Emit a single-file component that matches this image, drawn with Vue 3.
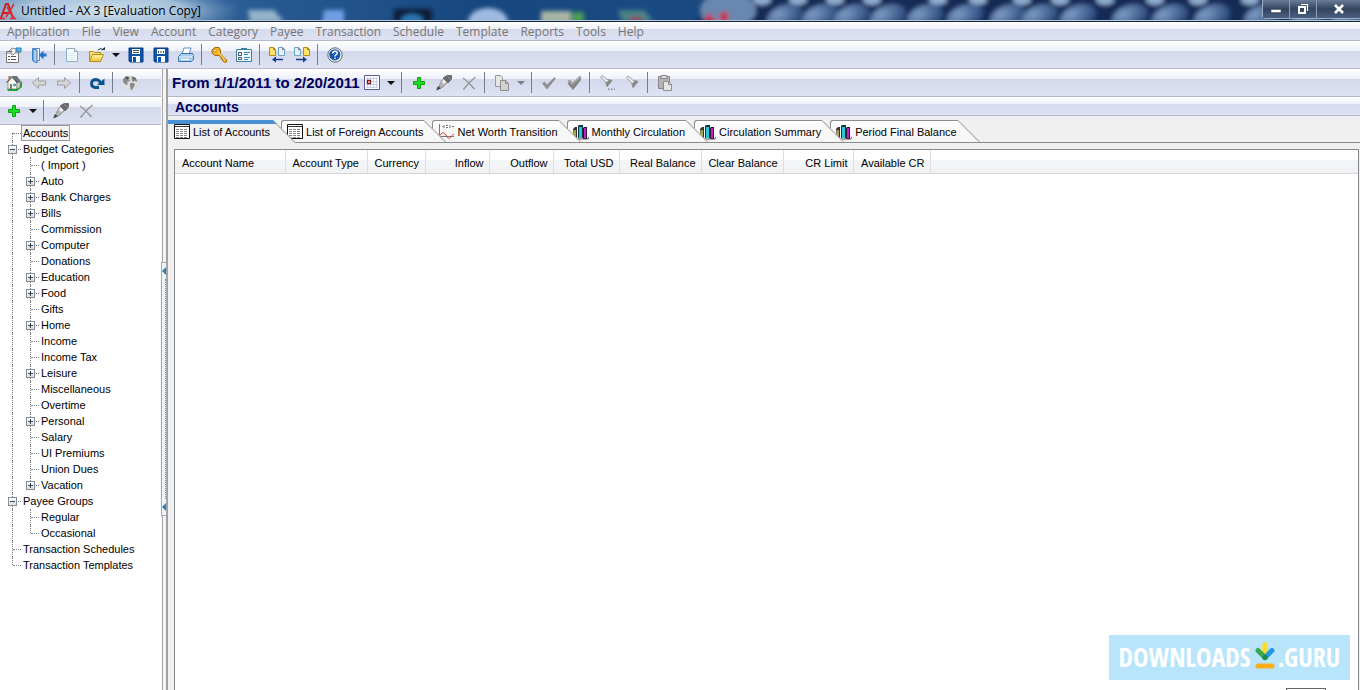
<template>
  <div class="window">
    <!-- icon sprite -->
    <svg class="sprite" aria-hidden="true">
      <linearGradient id="folder" x1="0" y1="0" x2="0" y2="1">
        <stop offset="0" stop-color="#fff6b0" />
        <stop offset="1" stop-color="#f0c030" />
      </linearGradient>
      <symbol id="i-props" viewBox="0 0 16 16">
        <path d="M.500 4.500h12v11H.500z" fill="#fff" stroke="#777" />
        <path d="M1 5h11v2H1z" fill="#c4c4c4" />
        <path d="M2 9.500h2M2 12.500h2M5 9.500h5M5 12.500h5" stroke="#555" />
        <path d="M3 4l3-3 4 1v3L7 8 5 7l1-3z" fill="#eee" stroke="#888" />
        <path d="M10 1h5v4h-4z" fill="#5cb3e8" stroke="#2f7fb8" />
      </symbol>
      <symbol id="i-exit" viewBox="0 0 16 16">
        <path d="M1.500 1.500h7v12h-7z" fill="#fff" stroke="#4a86c5" />
        <path d="M2 2l4 1v13l-4-2z" fill="#a9cdf0" stroke="#3b78bd" />
        <path d="M15.500 6.500v3h-3v3L8 8l4.500-4.500v3z" fill="#1e74cf" />
      </symbol>
      <symbol id="i-new" viewBox="0 0 16 16">
        <path d="M2.500 1.500h8l3 3v10h-11z" fill="#fafdff" stroke="#8aaebf" />
        <path d="M10.500 1.500v3h3" fill="#cde4ef" stroke="#8aaebf" />
        <path d="M4 6.500h7M4 8.500h8M4 10.500h8M4 12.500h8" stroke="#d8eaf2" />
      </symbol>
      <symbol id="i-open" viewBox="0 0 18 16">
        <path d="M1.500 14V4.500h4l1 1h6V8" fill="#f7dd77" stroke="#b98d14" />
        <path d="M1.500 14.500l3-7h11l-3 7z" fill="url(#folder)" stroke="#b98d14" />
        <path d="M10 3q3-3 5 0" fill="none" stroke="#234" />
        <path d="M13 3h4V0z" fill="#234" />
      </symbol>
      <symbol id="i-save" viewBox="0 0 16 16">
        <path d="M1 1h14v14H2l-1-1z" fill="#0d56ae" stroke="#083a80" />
        <path d="M4 2h8v5H4z" fill="#fff" />
        <path d="M5 3.500h6M5 5.500h6" stroke="#456" />
        <path d="M4 9h8v6H4z" fill="#fff" />
        <path d="M5 10h3v5H5z" fill="#0d56ae" />
      </symbol>
      <symbol id="i-saveas" viewBox="0 0 16 16">
        <path d="M1 1h14v14H2l-1-1z" fill="#0d56ae" stroke="#083a80" />
        <path d="M4 2h8v5H4z" fill="#fff" />
        <path d="M5 4h1v2H5zM7.500 4h1v2h-1zM10 4h1v2h-1z" fill="#345" />
        <path d="M4 9h8v6H4z" fill="#fff" />
        <path d="M5 10h3v5H5z" fill="#0d56ae" />
      </symbol>
      <symbol id="i-print" viewBox="0 0 16 16">
        <path d="M4 7l2-6h7l-2 6z" fill="#fff" stroke="#5b90c5" />
        <path d="M.500 9.500l3-3h11l1 2v4l-2 2h-13z" fill="#a8cdf0" stroke="#3374b5" />
        <path d="M1 10h12l2-2" fill="none" stroke="#e5f3ff" />
        <path d="M3 12.500h8" stroke="#fff" />
      </symbol>
      <symbol id="i-key" viewBox="0 0 16 16">
        <path d="M1 3l3-2.500h4L9.500 3v4l6 6v2l-2 .5-2-2v-1.500h-1.500V10L8 8.500H4L1 6z" fill="#f2b21b" stroke="#a56a05" />
        <circle cx="4" cy="3.500" r="1.300" fill="#fff" stroke="#a56a05" stroke-width=".6" />
        <path d="M7 5l7 8" stroke="#ffe590" />
      </symbol>
      <symbol id="i-list" viewBox="0 0 16 16">
        <path d="M.500 2.500h15v12H.500z" fill="#eef8fe" stroke="#3d80a8" />
        <path d="M5 1h6v2H5z" fill="#3d80a8" />
        <path d="M2.500 5.500h3v3h-3zM2.500 10.500h3v2h-3z" fill="#fff" stroke="#456" />
        <path d="M8 5.500h6M8 7.500h4M8 10.500h6M8 12.500h4" stroke="#3a89b8" />
      </symbol>
      <symbol id="i-prev" viewBox="0 0 18 16">
        <path d="M1.500.500h4l2 2v6h-6z" fill="#ffe566" stroke="#b58c10" />
        <path d="M10.500.500h4l2 2v6h-6z" fill="#e3f3fd" stroke="#6fa1c2" />
        <path d="M5.500.500v2h2M14.500.500v2h2" fill="none" stroke="#777" />
        <path d="M4 12.500l4-3v2.300h7v1.400H8v2.300z" fill="#103c8c" />
      </symbol>
      <symbol id="i-next" viewBox="0 0 18 16">
        <path d="M1.500.500h4l2 2v6h-6z" fill="#e3f3fd" stroke="#6fa1c2" />
        <path d="M10.500.500h4l2 2v6h-6z" fill="#ffe566" stroke="#b58c10" />
        <path d="M5.500.500v2h2M14.500.500v2h2" fill="none" stroke="#777" />
        <path d="M14 12.500l-4-3v2.300H3v1.400h7v2.300z" fill="#103c8c" />
      </symbol>
      <symbol id="i-help" viewBox="0 0 16 16">
        <circle cx="8" cy="8" r="7.200" fill="#f4f4f4" stroke="#666" />
        <circle cx="7.800" cy="7.800" r="5.600" fill="#1556b0" />
        <path d="M5.800 6.500q0-2.300 2.200-2.300t2.200 1.900q0 1.200-1.200 1.800-1 .5-1 1.500M8 10.800v1.300" fill="none" stroke="#fff" stroke-width="1.500" />
      </symbol>
      <symbol id="i-home" viewBox="0 0 16 16">
        <path d="M10 12l6-6v6l-5 4H2l-1-2z" fill="#19a832" />
        <path d="M2 7l4-4.500L11 8v6H2z" fill="#fffdf0" stroke="#666" stroke-width=".7" />
        <path d="M11 7l3-1v6l-3 2z" fill="#e0dcc8" stroke="#777" stroke-width=".7" />
        <path d="M6 1h5l4 5.500-3 1.500z" fill="#687480" />
        <path d="M.500 7.500L6 1.500l6 6.500" fill="none" stroke="#444" />
        <path d="M2.500 1h2v2l-2 2z" fill="#a86d48" />
        <path d="M4 9h2v5H4z" fill="#777" />
        <path d="M7.500 9h2v2h-2z" fill="#4fb5e6" stroke="#367" stroke-width=".5" />
      </symbol>
      <symbol id="i-back" viewBox="0 0 16 16">
        <path d="M1.500 8l6-5.500V6h7v4h-7v3.500z" fill="#d6d6d6" stroke="#a0a0a0" />
      </symbol>
      <symbol id="i-forward" viewBox="0 0 16 16">
        <path d="M14.500 8l-6-5.500V6h-7v4h7v3.500z" fill="#d6d6d6" stroke="#a0a0a0" />
      </symbol>
      <symbol id="i-refresh" viewBox="0 0 16 16">
        <path d="M10 12.500H6Q2.500 12 2.500 8.500T6.500 4.500q3 0 5 3" fill="none" stroke="#0a5192" stroke-width="2.800" />
        <path d="M15.500 3.500V10H8z" fill="#0a5192" />
      </symbol>
      <symbol id="i-globe" viewBox="0 0 16 16">
        <circle cx="8" cy="8" r="7.500" fill="#dedede" />
        <path d="M1 4l3-3 4 1-1 2 1 2-3 1 1 2-2 1-3-3zM10 1l4 2 1.500 4-3-1-2 1-1-3zM8 8h4l1 2-3 5H9l-1-4z" fill="#8a8a8a" />
        <path d="M4 2l2 2M12 3l1 1" stroke="#444" stroke-width="1.500" />
      </symbol>
      <symbol id="i-add" viewBox="0 0 16 16">
        <path d="M6.500 2.500h3v4h4v3h-4v4h-3v-4h-4v-3h4z" fill="#1be01f" stroke="#07a30d" />
      </symbol>
      <symbol id="i-edit" viewBox="0 0 18 16">
        <path d="M8 3L12 .500h4.500V4L13 8z" fill="#6a6a6a" stroke="#555" stroke-width=".7" />
        <path d="M12.500 1.500l3 3" stroke="#999" />
        <path d="M7 4.500l5 3.500-4 4-5 2L5.500 7.500z" fill="#b5b5b5" stroke="#888" stroke-width=".8" />
        <path d="M8.500 4.500l3 2.500-2 2-3-2z" fill="#eee" />
        <path d="M1 15.500L3 11l3 2.500z" fill="#444" />
      </symbol>
      <symbol id="i-delete" viewBox="0 0 16 16">
        <path d="M2 3Q8 7 13.500 14M14.500 2Q8 7 2.500 14.500" fill="none" stroke="#959595" stroke-width="1.400" />
      </symbol>
      <symbol id="i-calendar" viewBox="0 0 16 16">
        <path d="M.500.500h15v14H.500z" fill="#fff" stroke="#5a5a9c" />
        <path d="M3.500 2v11M6.500 2v11M9.500 2v11M12.500 2v11M2 3.500h12M2 6.500h12M2 9.500h12M2 12.500h12" stroke="#ccd2ee" />
        <path d="M3.500 5.500h3v3h-3z" fill="#fff" stroke="#8b1010" stroke-width="1.300" />
      </symbol>
      <symbol id="i-copy" viewBox="0 0 16 16">
        <path d="M1.500.500h5l2 2v9h-7z" fill="#e6e6e6" stroke="#999" />
        <path d="M6.500 5.500h5l3 3v7h-8z" fill="#d2d2d2" stroke="#8d8d8d" />
        <path d="M11.500 5.500v3h3" fill="none" stroke="#8d8d8d" />
      </symbol>
      <symbol id="i-check" viewBox="0 0 16 16">
        <path d="M1.500 8.500l2-1.500L6 10l7.500-7.500 1 1L6 14z" fill="#909090" stroke="#858585" stroke-width=".6" />
      </symbol>
      <symbol id="i-checks" viewBox="0 0 16 16">
        <path d="M2 6l2-1 2.500 3L14 1l1 2-8 11z" fill="#ababab" stroke="#858585" stroke-width=".6" />
        <path d="M1.500 8.500l2-1.500L6 10l8.500-7 .5 2-8 10z" fill="#858585" />
      </symbol>
      <symbol id="i-torch" viewBox="0 0 16 16">
        <path d="M2.500 2.500l2-1.500L9 5.500l5 1-5 6-1.500-4.500z" fill="#eee" stroke="#999" />
        <path d="M8 8.500L12 5l2 2-5 6z" fill="#888" />
      </symbol>
      <symbol id="i-torchdots" viewBox="0 0 16 16">
        <path d="M1.500 2l2-1.500L8 4.500l5 1-5 6L6.500 7z" fill="#eee" stroke="#999" />
        <path d="M7 7.500L11 4l2 2-5 6z" fill="#888" />
        <path d="M9 13.500h1.500v1.500H9zM12 13.500h1.500v1.500H12zM15 13.500h1v1.500h-1z" fill="#888" />
      </symbol>
      <symbol id="i-paste" viewBox="0 0 16 16">
        <path d="M1.500 1.500h11v12h-11z" fill="#b4b4b4" stroke="#888" />
        <path d="M4 .500h6v3H4z" fill="#ddd" stroke="#888" />
        <path d="M6.500 6.500h5l3 3v6h-8z" fill="#e4e4e4" stroke="#8d8d8d" />
        <path d="M11.500 6.500v3h3" fill="none" stroke="#8d8d8d" />
      </symbol>
      <symbol id="i-table" viewBox="0 0 16 16">
        <path d="M.500.500h15v14H.500z" fill="#fff" stroke="#111" />
        <path d="M1 2.500h14" stroke="#333" />
        <path d="M2 5.500h12M2 7.500h12M2 9.500h12M2 11.500h12M2 13.500h12" stroke="#888" stroke-dasharray="3 1" />
      </symbol>
      <symbol id="i-line" viewBox="0 0 16 16">
        <path d="M1.500 0v14M0 12.500h16" stroke="#777" />
        <path d="M4 2.500h1M6 1v3M8 1.500h2M8 3.500h2M12 1v3M14 2.500h2" stroke="#777" />
        <path d="M1.500 12Q5 6 8 11t4 3 4-4" fill="none" stroke="#d44" />
      </symbol>
      <symbol id="i-bars" viewBox="0 0 16 16">
        <path d="M0 5l2-2h2v11H1z" fill="#333" />
        <path d="M1 6h2v7H1z" fill="#a8a83a" />
        <path d="M5 2l1-1h4v13H5z" fill="#134" />
        <path d="M6 3h3v11H6z" fill="#26c6d4" />
        <path d="M10 4l1-1h3v12h-4z" fill="#301035" />
        <path d="M11 4h2v10h-2z" fill="#c422c4" />
        <path d="M0 13l3 2h12l1-2" fill="none" stroke="#555" />
      </symbol>
    </svg>

    <header class="title-bar">
      <svg class="backdrop" aria-hidden="true">
        <defs>
          <radialGradient id="bead" cx=".35" cy=".3" r=".7">
            <stop offset="0" stop-color="#7d9cc4" />
            <stop offset="1" stop-color="#2a487c" />
          </radialGradient>
          <radialGradient id="glow">
            <stop offset="0" stop-color="#cfe0ee" />
            <stop offset=".6" stop-color="#b5cde2" stop-opacity=".85" />
            <stop offset="1" stop-color="#6f9ac0" stop-opacity="0" />
          </radialGradient>
          <filter id="soft"><feGaussianBlur stdDeviation="2" /></filter>
        </defs>
        <ellipse cx="105" cy="11" rx="135" ry="26" fill="url(#glow)" />
        <g filter="url(#soft)">
          <path d="M248 10h26l10 12h-34z" fill="#93b4c9" />
          <path d="M324 10h20v14h-22z" fill="#6f9fe6" />
          <path d="M394 9h38v14h-38z" fill="#0b1d38" />
          <ellipse cx="412" cy="20" rx="11" ry="6" fill="#2c74b4" />
          <ellipse cx="488" cy="22" rx="20" ry="14" fill="#9db9e2" />
          <path d="M541 11h30v12h-30z" fill="#a8b5a4" />
          <path d="M572 12h12v12h-12z" fill="#4b9b52" />
          <path d="M618 10h26l10 12h-32z" fill="#4b8285" />
          <path d="M630 17h12v6h-12z" fill="#8d4660" />
          <path d="M696 24Q705-4 735-4h700v30z" fill="#132a57" />
          <ellipse cx="728" cy="10" rx="28" ry="18" fill="#6987b0" />
          <path d="M702 24l7-12 9 12zM720 12h8v10h-8z" fill="#c52d4e" />
          <ellipse
            v-for="bead in lowerBeads"
            :key="bead"
            :cx="bead"
            cy="17"
            rx="19"
            ry="12"
            fill="url(#bead)"
            :transform="`rotate(-20 ${bead} 17)`"
          />
          <ellipse
            v-for="bead in upperBeads"
            :key="'u' + bead"
            :cx="bead"
            cy="0"
            rx="9"
            ry="5"
            fill="#8fadcf"
          />
        </g>
      </svg>
      <svg class="app-logo" viewBox="0 0 16 18" aria-hidden="true">
        <path d="M1 16L6 2h2l5 14M3 11h7" fill="none" stroke="#d21f26" stroke-width="2" />
        <path d="M7 5l7 11M14 2L6 15M0 16.500h5M10 16.500h6" stroke="#e0282c" stroke-width="1.500" />
      </svg>
      <h1 class="title">Untitled - AX 3 [Evaluation Copy]</h1>
      <div class="window-buttons">
        <button type="button" class="window-button" aria-label="Minimize">
          <svg viewBox="0 0 12 12"><path d="M1 6.500h10v3H1z" fill="#fff" stroke="#445" stroke-width=".5" /></svg>
        </button>
        <button type="button" class="window-button" aria-label="Restore">
          <svg viewBox="0 0 12 12">
            <path d="M4 1.500h6.500V8" fill="none" stroke="#fff" stroke-width="1.200" />
            <path d="M2 4h6v6H2z" fill="none" stroke="#fff" stroke-width="2" />
          </svg>
        </button>
        <button type="button" class="window-button close" aria-label="Close">
          <svg viewBox="0 0 12 12"><path d="M2 2l8 8M10 2l-8 8" stroke="#fff" stroke-width="2.500" /></svg>
        </button>
      </div>
    </header>

    <nav class="menu-bar">
      <button v-for="menu in menus" :key="menu" type="button" class="menu">{{ menu }}</button>
    </nav>

    <div class="tool-bar main-tools">
      <template v-for="(tool, index) in mainTools" :key="index">
        <span v-if="tool.sep" class="separator"></span>
        <button v-else type="button" :class="tool.drop ? 'drop' : 'tool'" :aria-label="tool.label">
          <svg v-if="!tool.drop" :class="{ wide: tool.wide }"><use :href="'#i-' + tool.icon" /></svg>
        </button>
      </template>
    </div>

    <div class="workspace">
      <aside class="side">
        <div class="tool-bar">
          <template v-for="(tool, index) in navTools" :key="index">
            <span v-if="tool.sep" class="separator"></span>
            <button v-else type="button" class="tool" :aria-label="tool.label">
              <svg><use :href="'#i-' + tool.icon" /></svg>
            </button>
          </template>
        </div>
        <div class="tool-bar">
          <template v-for="(tool, index) in treeTools" :key="index">
            <span v-if="tool.sep" class="separator"></span>
            <button v-else type="button" :class="tool.drop ? 'drop' : 'tool'" :aria-label="tool.label">
              <svg v-if="!tool.drop" :class="{ wide: tool.wide }"><use :href="'#i-' + tool.icon" /></svg>
            </button>
          </template>
        </div>

        <ul class="tree">
          <li v-for="node in nodes" :key="node.name" class="node">
            <span v-if="node.level" class="guide"></span>
            <span
              class="guide branch"
              :class="{ first: node.first, last: node.last }"
            >
              <button v-if="node.box" type="button" class="toggle" :class="node.box" :aria-label="'Toggle ' + node.name"></button>
            </span>
            <span class="node-name" :class="{ selected: node.selected }">{{ node.name }}</span>
          </li>
        </ul>
      </aside>

      <div class="splitter">
        <button type="button" class="grip" aria-label="Collapse sidebar">
          <span class="arrow"></span>
          <span class="dots"></span>
          <span class="arrow"></span>
        </button>
      </div>

      <main class="content">
        <div class="tool-bar">
          <h2 class="period">From 1/1/2011 to 2/20/2011</h2>
          <template v-for="(tool, index) in accountTools" :key="index">
            <span v-if="tool.sep" class="separator"></span>
            <button
              v-else
              type="button"
              :class="[tool.drop ? 'drop' : 'tool', { dim: tool.dim }]"
              :aria-label="tool.label"
            >
              <svg v-if="!tool.drop" :class="{ wide: tool.wide }"><use :href="'#i-' + tool.icon" /></svg>
            </button>
          </template>
        </div>
        <h2 class="section-title">Accounts</h2>

        <div class="tabs" role="tablist">
          <button
            v-for="(tab, index) in tabs"
            :key="tab.name"
            type="button"
            role="tab"
            class="tab"
            :class="{ active: index === 0 }"
            :aria-selected="index === 0"
            :style="{ zIndex: tabs.length - index }"
          >
            <span class="tab-body">
              <svg class="tab-icon"><use :href="'#i-' + tab.icon" /></svg>
              {{ tab.name }}
            </span>
            <svg class="slope" viewBox="0 0 23 23">
              <path d="M0 0L23 23H0z" :fill="index === 0 ? '#f0f0f0' : '#f7f7f7'" />
              <path v-if="index === 0" d="M0 0l4 4H0z" fill="#4a90d4" />
              <path d="M0 .500L22.500 23" fill="none" stroke="#8c8c8c" />
              <path v-if="index !== 0" d="M0 22.500h23" stroke="#8c8c8c" />
            </svg>
          </button>
        </div>

        <div class="table-panel">
          <table class="accounts">
            <colgroup>
              <col v-for="column in columns" :key="column.name" :style="{ width: column.width + 'px' }" />
              <col />
            </colgroup>
            <thead>
              <tr>
                <th v-for="column in columns" :key="column.name" :class="{ number: column.number }">
                  {{ column.name }}
                </th>
                <th class="filler"></th>
              </tr>
            </thead>
          </table>
        </div>
      </main>
    </div>

    <div class="corner-box"></div>
    <a href="#" class="badge">
      <span>DOWNLOADS</span>
      <svg viewBox="0 0 20 28" aria-hidden="true">
        <path d="M10 4v12" stroke="#fddc32" stroke-width="5.500" stroke-linecap="round" />
        <path d="M3 9.500l7 7" stroke="#3aaa4d" stroke-width="5" stroke-linecap="round" />
        <path d="M17 9.500l-7 7" stroke="#2697df" stroke-width="5" stroke-linecap="round" />
        <circle cx="10" cy="16.500" r="2.500" fill="#178a4c" />
        <path d="M3 25h14" stroke="#fbae17" stroke-width="5" stroke-linecap="round" />
      </svg>
      <span>.GURU</span>
    </a>
  </div>
</template>

<script setup>
const lowerBeads = [785, 820, 852, 888, 925, 965, 1008, 1040, 1078, 1130, 1170, 1212, 1262, 1310, 1350];
const upperBeads = [762, 798, 835, 872, 938, 978, 1022, 1060, 1105, 1155, 1198, 1250];

const menus = [
  "Application",
  "File",
  "View",
  "Account",
  "Category",
  "Payee",
  "Transaction",
  "Schedule",
  "Template",
  "Reports",
  "Tools",
  "Help",
];

const mainTools = [
  { icon: "props", label: "Properties" },
  { icon: "exit", label: "Exit" },
  { sep: true },
  { icon: "new", label: "New" },
  { icon: "open", label: "Open", wide: true },
  { drop: true, label: "Recent files" },
  { icon: "save", label: "Save" },
  { icon: "saveas", label: "Save as" },
  { icon: "print", label: "Print" },
  { sep: true },
  { icon: "key", label: "Password" },
  { icon: "list", label: "Options" },
  { sep: true },
  { icon: "prev", label: "Import", wide: true },
  { icon: "next", label: "Export", wide: true },
  { sep: true },
  { icon: "help", label: "Help" },
];

const navTools = [
  { icon: "home", label: "Home" },
  { icon: "back", label: "Back" },
  { icon: "forward", label: "Forward" },
  { sep: true },
  { icon: "refresh", label: "Refresh" },
  { sep: true },
  { icon: "globe", label: "Web" },
];

const treeTools = [
  { icon: "add", label: "Add" },
  { drop: true, label: "Add options" },
  { sep: true },
  { icon: "edit", label: "Edit", wide: true },
  { icon: "delete", label: "Delete" },
];

const accountTools = [
  { icon: "calendar", label: "Select period" },
  { drop: true, label: "Period options" },
  { sep: true },
  { icon: "add", label: "Add" },
  { icon: "edit", label: "Edit", wide: true },
  { icon: "delete", label: "Delete" },
  { sep: true },
  { icon: "copy", label: "Copy" },
  { drop: true, dim: true, label: "Copy options" },
  { sep: true },
  { icon: "check", label: "Clear" },
  { icon: "checks", label: "Reconcile" },
  { sep: true },
  { icon: "torchdots", label: "Find" },
  { icon: "torch", label: "Find next" },
  { sep: true },
  { icon: "paste", label: "Paste" },
];

const nodes = [
  { name: "Accounts", level: 0, first: true, selected: true },
  { name: "Budget Categories", level: 0, box: "minus" },
  { name: "( Import )", level: 1 },
  { name: "Auto", level: 1, box: "plus" },
  { name: "Bank Charges", level: 1, box: "plus" },
  { name: "Bills", level: 1, box: "plus" },
  { name: "Commission", level: 1 },
  { name: "Computer", level: 1, box: "plus" },
  { name: "Donations", level: 1 },
  { name: "Education", level: 1, box: "plus" },
  { name: "Food", level: 1, box: "plus" },
  { name: "Gifts", level: 1 },
  { name: "Home", level: 1, box: "plus" },
  { name: "Income", level: 1 },
  { name: "Income Tax", level: 1 },
  { name: "Leisure", level: 1, box: "plus" },
  { name: "Miscellaneous", level: 1 },
  { name: "Overtime", level: 1 },
  { name: "Personal", level: 1, box: "plus" },
  { name: "Salary", level: 1 },
  { name: "UI Premiums", level: 1 },
  { name: "Union Dues", level: 1 },
  { name: "Vacation", level: 1, box: "plus", last: true },
  { name: "Payee Groups", level: 0, box: "minus" },
  { name: "Regular", level: 1 },
  { name: "Occasional", level: 1, last: true },
  { name: "Transaction Schedules", level: 0 },
  { name: "Transaction Templates", level: 0, last: true },
];

const tabs = [
  { name: "List of Accounts", icon: "table" },
  { name: "List of Foreign Accounts", icon: "table" },
  { name: "Net Worth Transition", icon: "line" },
  { name: "Monthly Circulation", icon: "bars" },
  { name: "Circulation Summary", icon: "bars" },
  { name: "Period Final Balance", icon: "bars" },
];

const columns = [
  { name: "Account Name", width: 110 },
  { name: "Account Type", width: 82 },
  { name: "Currency", width: 58 },
  { name: "Inflow", width: 64, number: true },
  { name: "Outflow", width: 64, number: true },
  { name: "Total USD", width: 66, number: true },
  { name: "Real Balance", width: 82, number: true },
  { name: "Clear Balance", width: 82, number: true },
  { name: "CR Limit", width: 70, number: true },
  { name: "Available CR", width: 77, number: true },
];
</script>

<style>
body {
  overflow: hidden;
}
</style>

<style scoped>
.window {
  height: 100vh;
  display: flex;
  flex-direction: column;
  position: relative;
  background: #f0f0f0;
  color: #000;
  font-family: "Liberation Sans", Arial, sans-serif;
  font-size: 11px;
}

.sprite {
  position: absolute;
  width: 0;
  height: 0;
}

button {
  margin: 0;
  padding: 0;
  border: 0;
  background: none;
  color: inherit;
  font: inherit;
}

h1,
h2 {
  margin: 0;
}

/* title bar */
.title-bar {
  flex: none;
  display: flex;
  align-items: center;
  height: 22px;
  box-sizing: border-box;
  position: relative;
  overflow: hidden;
  background: linear-gradient(90deg, #7fa5c8, #2a5c94 18%, #17477f 35%, #1a4a82 50%, #16305c);
  border-bottom: 1px solid #16233a;
  box-shadow: inset 0 -1px #b9c9da;
}

.backdrop {
  position: absolute;
  left: 0;
  top: 0;
  width: 100%;
  height: 20px;
}

.app-logo {
  position: relative;
  width: 16px;
  height: 18px;
}

.title {
  position: relative;
  margin-left: 5px;
  font-family: "Open Sans", "Noto Sans", sans-serif;
  font-size: 12px;
  font-weight: 400;
  line-height: 22px;
}

.window-buttons {
  position: relative;
  display: flex;
  align-self: flex-start;
  margin-left: auto;
  height: 18px;
  border: 1px solid #9fb0c6;
  border-width: 0 0 1px 1px;
  border-radius: 0 0 0 4px;
}

.window-button {
  display: flex;
  align-items: center;
  justify-content: center;
  width: 27px;
  border-right: 1px solid #8d9db5;
  background: linear-gradient(#6a7c98, #33445f 50%, #4a5f80);
}

.window-button.close {
  width: 43px;
  border-right: 0;
}

.window-button svg {
  width: 12px;
  height: 12px;
}

/* menu and tool bars */
.menu-bar {
  flex: none;
  display: flex;
  align-items: center;
  height: 19px;
  box-sizing: border-box;
  padding-left: 1px;
  background: linear-gradient(#fff, #eef1f8 7px, #d5dcea 7px, #dfe1f5);
  border-bottom: 1px solid #b4b9cc;
}

.menu {
  padding: 1px 6px 0;
  color: #757575;
  font-family: "Open Sans", "Noto Sans", sans-serif;
  font-size: 12px;
  line-height: 18px;
}

.tool-bar {
  flex: none;
  display: flex;
  align-items: center;
  height: 28px;
  box-sizing: border-box;
  padding-left: 1px;
  background: linear-gradient(#fff, #eef1fa 10px, #d3d9ea 10px, #dde2f4);
  border-bottom: 1px solid #b4b9cc;
}

.tool {
  display: flex;
  align-items: center;
  justify-content: center;
  width: 25px;
  height: 24px;
}

.tool svg {
  width: 16px;
  height: 16px;
}

.tool svg.wide {
  width: 18px;
}

.drop {
  display: flex;
  align-items: center;
  justify-content: center;
  width: 14px;
  height: 24px;
}

.drop::before {
  content: "";
  border: 4px solid transparent;
  border-top-color: #111;
  border-bottom: 0;
}

.drop.dim::before {
  border-top-color: #808080;
}

.separator {
  width: 1px;
  height: 21px;
  margin: 0 4px 0 3px;
  background: #777c8c;
}

.workspace {
  flex: 1;
  display: flex;
  min-height: 0;
}

/* sidebar */
.side {
  flex: none;
  display: flex;
  flex-direction: column;
  width: 161px;
  background: #fff;
}

.tree {
  list-style: none;
  margin: 0;
  padding: 0 0 0 3px;
}

.node {
  display: flex;
  height: 16px;
  line-height: 16px;
}

.guide {
  position: relative;
  width: 18px;
}

.guide::before {
  content: "";
  position: absolute;
  left: 9px;
  top: 0;
  bottom: 0;
  border-left: 1px dotted #808080;
}

.guide.first::before {
  top: 8px;
}

.guide.last::before {
  bottom: 8px;
}

.branch::after {
  content: "";
  position: absolute;
  left: 10px;
  right: 0;
  top: 8px;
  border-top: 1px dotted #808080;
}

.toggle {
  position: absolute;
  z-index: 1;
  left: 5px;
  top: 4px;
  width: 9px;
  height: 9px;
  border: 1px solid #848c9c;
  background:
    linear-gradient(#345, #345) center / 5px 1px no-repeat,
    linear-gradient(#fff, #ddd);
}

.toggle.plus {
  background:
    linear-gradient(#345, #345) center / 5px 1px no-repeat,
    linear-gradient(#345, #345) center / 1px 5px no-repeat,
    linear-gradient(#fff, #ddd);
}

.node-name {
  padding: 0 2px;
  white-space: nowrap;
}

.node-name.selected {
  background: #f3f3f3;
  box-shadow: inset 0 0 0 1px #999;
}

/* splitter */
.splitter {
  flex: none;
  display: flex;
  flex-direction: column;
  justify-content: center;
  width: 7px;
  box-sizing: border-box;
  padding-top: 18px;
  background: linear-gradient(90deg, #f4f4f4 1px, #aaa 1px 2px, #f4f4f4 2px 5px, #a0a0a0 5px);
}

.grip {
  display: flex;
  flex-direction: column;
  align-items: flex-end;
  justify-content: space-between;
  width: 6px;
  height: 254px;
  padding: 4px 0;
  box-sizing: border-box;
  border: 1px solid #a8a8a8;
  background: #edf6fb;
}

.arrow {
  border: 4px solid transparent;
  border-right-color: #2e7fb5;
  border-left: 0;
}

.dots {
  flex: 1;
  margin: 4px 0;
  border-right: 1px dotted #5c94a8;
}

/* content */
.content {
  flex: 1;
  display: flex;
  flex-direction: column;
  min-width: 0;
}

.period {
  width: 187px;
  padding-left: 3px;
  color: #00005c;
  font-size: 15px;
  white-space: nowrap;
}

.section-title {
  flex: none;
  height: 19px;
  box-sizing: border-box;
  padding: 1px 0 0 7px;
  background: linear-gradient(#fff, #eef1fa 7px, #d4daef 7px, #dde2f5);
  border-bottom: 1px solid #b4b9cc;
  color: #00005c;
  font-size: 14px;
  line-height: 19px;
}

.tabs {
  flex: none;
  display: flex;
  height: 27px;
  box-sizing: border-box;
  padding-top: 4px;
  border-bottom: 1px solid #8c8c8c;
}

.tab {
  position: relative;
  display: flex;
  height: 23px;
  margin-right: -15px;
}

.tab-body {
  display: flex;
  align-items: center;
  gap: 3px;
  box-sizing: border-box;
  height: 23px;
  padding: 0 1px 0 5px;
  border: 1px solid #8c8c8c;
  border-right: 0;
  border-radius: 3px 0 0 0;
  background: linear-gradient(#fff, #f3f3f3);
  white-space: nowrap;
}

.tab.active .tab-body {
  padding-right: 3px;
  border-color: transparent;
  border-radius: 0;
  background: linear-gradient(#4a90d4 4px, #f0f0f0 4px) border-box;
}

.tab-icon {
  width: 16px;
  height: 16px;
}

.slope {
  width: 23px;
  height: 23px;
}

.table-panel {
  flex: 1;
  margin: 6px 1px 0 6px;
  border: 1px solid #828790;
  border-bottom: 0;
  background: #fff;
}

.accounts {
  width: 100%;
  table-layout: fixed;
  border-collapse: collapse;
}

.accounts th {
  height: 23px;
  box-sizing: border-box;
  padding: 4px 5px 0 7px;
  border-right: 1px solid #dedfe1;
  border-bottom: 1px solid #d5d5d5;
  background: linear-gradient(#fff 10px, #f4f5f7 10px, #f1f2f4);
  font-weight: 400;
  text-align: left;
  white-space: nowrap;
}

.accounts th.number {
  padding-left: 0;
  text-align: right;
}

.accounts th.filler {
  border-right: 0;
}

/* overlays */
.corner-box {
  position: absolute;
  right: 34px;
  bottom: 0;
  width: 38px;
  height: 1px;
  border: 1px solid #666;
  border-bottom: 0;
}

.badge {
  position: absolute;
  right: 10px;
  bottom: 10px;
  display: flex;
  align-items: center;
  justify-content: center;
  width: 241px;
  height: 45px;
  background: #b9e5fb;
  color: #fff;
  font-family: "Open Sans Condensed", "Liberation Sans Narrow", "Liberation Sans", sans-serif;
  font-size: 26px;
  font-weight: 700;
  line-height: 45px;
  text-decoration: none;
}

.badge svg {
  width: 20px;
  height: 28px;
  margin: 0 3px 6px 4px;
}
</style>
